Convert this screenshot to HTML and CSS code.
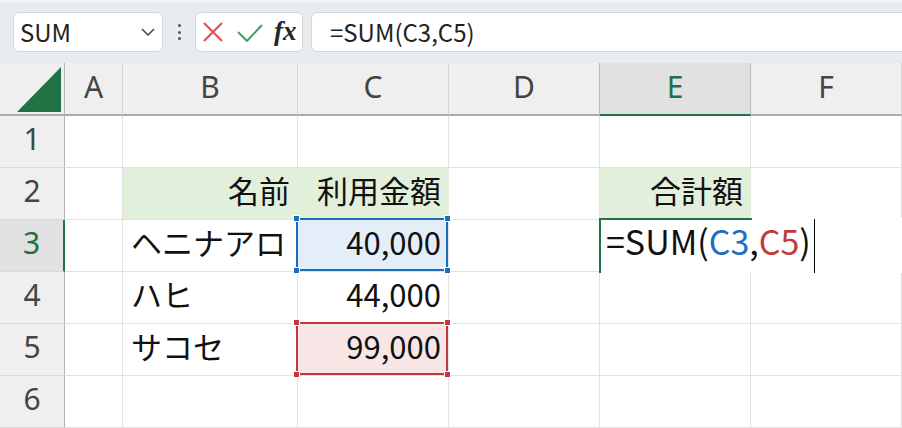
FILE: index.html
```html
<!DOCTYPE html>
<html lang="ja">
<head>
<meta charset="utf-8">
<title>SUM</title>
<link rel="stylesheet" href="styles.css">
</head>
<body>
<div class="toolbar">
  <div class="namebox">
    <span class="nb-text">SUM</span>
    <svg class="chev" width="14" height="8" viewBox="0 0 14 8"><polyline points="1,1 7,7 13,1" fill="none" stroke="#444" stroke-width="1.5"/></svg>
  </div>
  <div class="vdots"><i></i><i></i><i></i></div>
  <div class="fxbox">
    <svg class="ic-x" width="20" height="20" viewBox="0 0 20 20"><path d="M1 1 L19 19 M19 1 L1 19" stroke="#e5484d" stroke-width="2" fill="none"/></svg>
    <svg class="ic-check" width="26" height="19" viewBox="0 0 26 19"><polyline points="1,9 10,18 25,2" fill="none" stroke="#3aa55a" stroke-width="2"/></svg>
    <span class="fx">fx</span>
  </div>
  <div class="formula">=SUM(C3,C5)</div>
</div>

<div class="sheet">
  <div class="corner"><svg class="tri" width="44" height="45" viewBox="0 0 44 45"><polygon points="0,45 44,0 44,45" fill="#217346"/></svg></div>
  <div class="ch">A</div>
  <div class="ch">B</div>
  <div class="ch">C</div>
  <div class="ch pre-sel">D</div>
  <div class="ch sel">E</div>
  <div class="ch">F</div>

  <div class="rh">1</div>
  <div class="c"></div><div class="c"></div><div class="c"></div><div class="c"></div><div class="c"></div><div class="c"></div>

  <div class="rh">2</div>
  <div class="c"></div>
  <div class="c r fill">名前</div>
  <div class="c r fill">利用金額</div>
  <div class="c"></div>
  <div class="c r fill">合計額</div>
  <div class="c"></div>

  <div class="rh sel">3</div>
  <div class="c"></div>
  <div class="c">ヘニナアロ</div>
  <div class="c r ref-blue">40,000<div class="ref"><i class="h tl"></i><i class="h tr"></i><i class="h bl"></i><i class="h br"></i></div></div>
  <div class="c"></div>
  <div class="editor"><span class="etext">=SUM(<span class="cb">C3</span>,<span class="cr">C5</span>)</span><span class="caret"></span></div>

  <div class="rh">4</div>
  <div class="c"></div>
  <div class="c">ハヒ</div>
  <div class="c r">44,000</div>
  <div class="c"></div><div class="c"></div><div class="c"></div>

  <div class="rh">5</div>
  <div class="c"></div>
  <div class="c">サコセ</div>
  <div class="c r ref-red">99,000<div class="ref"><i class="h tl"></i><i class="h tr"></i><i class="h bl"></i><i class="h br"></i></div></div>
  <div class="c"></div><div class="c"></div><div class="c"></div>

  <div class="rh">6</div>
  <div class="c"></div><div class="c"></div><div class="c"></div><div class="c"></div><div class="c"></div><div class="c"></div>
</div>
</body>
</html>
```
FILE: styles.css
```css
* { box-sizing: border-box; }
body {
  margin: 0;
  width: 902px;
  height: 428px;
  overflow: hidden;
  background: #fff;
  font-family: "Noto Sans CJK JP", sans-serif;
}

/* toolbar */
.toolbar {
  height: 63px;
  padding: 12px 0 11px 13px;
  display: flex;
  background: linear-gradient(#f5f6f8 0, #e9ecef 4px);
  overflow: hidden;
}
.namebox {
  width: 150px;
  height: 40px;
  background: #fff;
  border: 1px solid #d3d6da;
  border-radius: 6px;
  display: flex;
  align-items: center;
  justify-content: space-between;
  padding: 0 7px 0 6px;
}
.nb-text { font-size: 24px; line-height: 24px; color: #222; }
.chev { display: block; }
.vdots {
  width: 32px;
  display: flex;
  flex-direction: column;
  align-items: center;
  justify-content: center;
  gap: 3.5px;
}
.vdots i { display: block; width: 3px; height: 3px; border-radius: 50%; background: #555; }
.fxbox {
  width: 108px;
  height: 40px;
  background: #fff;
  border: 1px solid #d3d6da;
  border-radius: 6px;
  display: flex;
  align-items: center;
}
.ic-x { display: block; margin-left: 7px; }
.ic-check { display: block; margin-left: 14px; }
.fx {
  margin-left: 11px;
  font-family: "Liberation Serif", serif;
  font-style: italic;
  font-weight: bold;
  font-size: 27px;
  line-height: 27px;
  color: #262626;
  margin-top: -2px;
}
.formula {
  flex: 1;
  margin-left: 8px;
  margin-right: -8px;
  height: 40px;
  background: #fff;
  border: 1px solid #d3d6da;
  border-radius: 6px;
  padding-left: 18px;
  display: flex;
  align-items: center;
  font-size: 24px;
  line-height: 24px;
  color: #222;
}

/* sheet */
.sheet {
  display: grid;
  grid-template-columns: 65px 58px 175px 151px 151px 151px 151px;
  grid-template-rows: 53px repeat(6, 52px);
}
.corner {
  background: #efefef;
  border-right: 1px solid #b5b5b5;
  border-bottom: 2px solid #ababab;
}
.tri { display: block; margin: 4px 0 0 17px; }
.ch {
  background: #efefef;
  border-right: 1px solid #d6d6d6;
  border-bottom: 2px solid #ababab;
  display: flex;
  align-items: center;
  justify-content: center;
  padding-bottom: 4px;
  font-family: "Noto Sans", sans-serif;
  font-size: 30px;
  line-height: 30px;
  color: #444;
}
.ch.pre-sel { border-right-color: #b8b8b8; }
.ch.sel { background: #e1e1e1; border-bottom-color: #217346; border-right-color: #b8b8b8; color: #1e7145; }
.rh {
  background: #efefef;
  border-right: 1px solid #b5b5b5;
  border-bottom: 1px solid #dadada;
  display: flex;
  align-items: center;
  justify-content: center;
  padding-bottom: 6px;
  font-family: "Noto Sans", sans-serif;
  font-size: 30px;
  line-height: 30px;
  color: #444;
}
.rh.sel { background: #e1e1e1; border-right: 2px solid #217346; color: #1e7145; }
.c {
  border-right: 1px solid #e1e1e1;
  border-bottom: 1px solid #e1e1e1;
  display: flex;
  align-items: center;
  padding: 0 7px 8px 8px;
  font-size: 31px;
  line-height: 31px;
  color: #111;
  white-space: nowrap;
}
.c.r { justify-content: flex-end; }
.fill { background: #e2efda; border-right-color: #e2efda; }

/* reference highlights */
.ref-blue, .ref-red { position: relative; }
.ref-blue { background: #e3eef9; }
.ref-red { background: #f8e6e6; }
.ref {
  position: absolute;
  top: -2px; left: -2px; right: 0; bottom: 0;
  border: 2px solid;
  z-index: 2;
}
.ref-blue .ref { border-color: #1a6dbd; }
.ref-red .ref { border-color: #c0393e; }
.h {
  position: absolute;
  width: 7px;
  height: 7px;
  border: 1px solid #fff;
}
.ref-blue .h { background: #1a6dbd; }
.ref-red .h { background: #c0393e; }
.h.tl { left: -5px; top: -5px; }
.h.tr { right: -5px; top: -5px; }
.h.bl { left: -5px; bottom: -5px; }
.h.br { right: -5px; bottom: -5px; }

/* in-cell editor */
.editor {
  grid-column: span 2;
  margin: -2px 0 -1px -1px;
  position: relative;
  z-index: 3;
  background: #fff;
  border-left: 2px solid #217346;
  display: flex;
  align-items: flex-start;
  padding-left: 5px;
}
.editor::before {
  content: "";
  position: absolute;
  top: 0;
  left: -2px;
  width: 153px;
  height: 2px;
  background: #217346;
}
.etext {
  margin-top: 5px;
  font-size: 34px;
  line-height: 35px;
  color: #111;
  white-space: nowrap;
}
.cb { color: #1a6fc2; }
.cr { color: #c4393e; }
.caret {
  align-self: stretch;
  width: 1px;
  margin: 1px 0 0 3px;
  background: #000;
}
```
